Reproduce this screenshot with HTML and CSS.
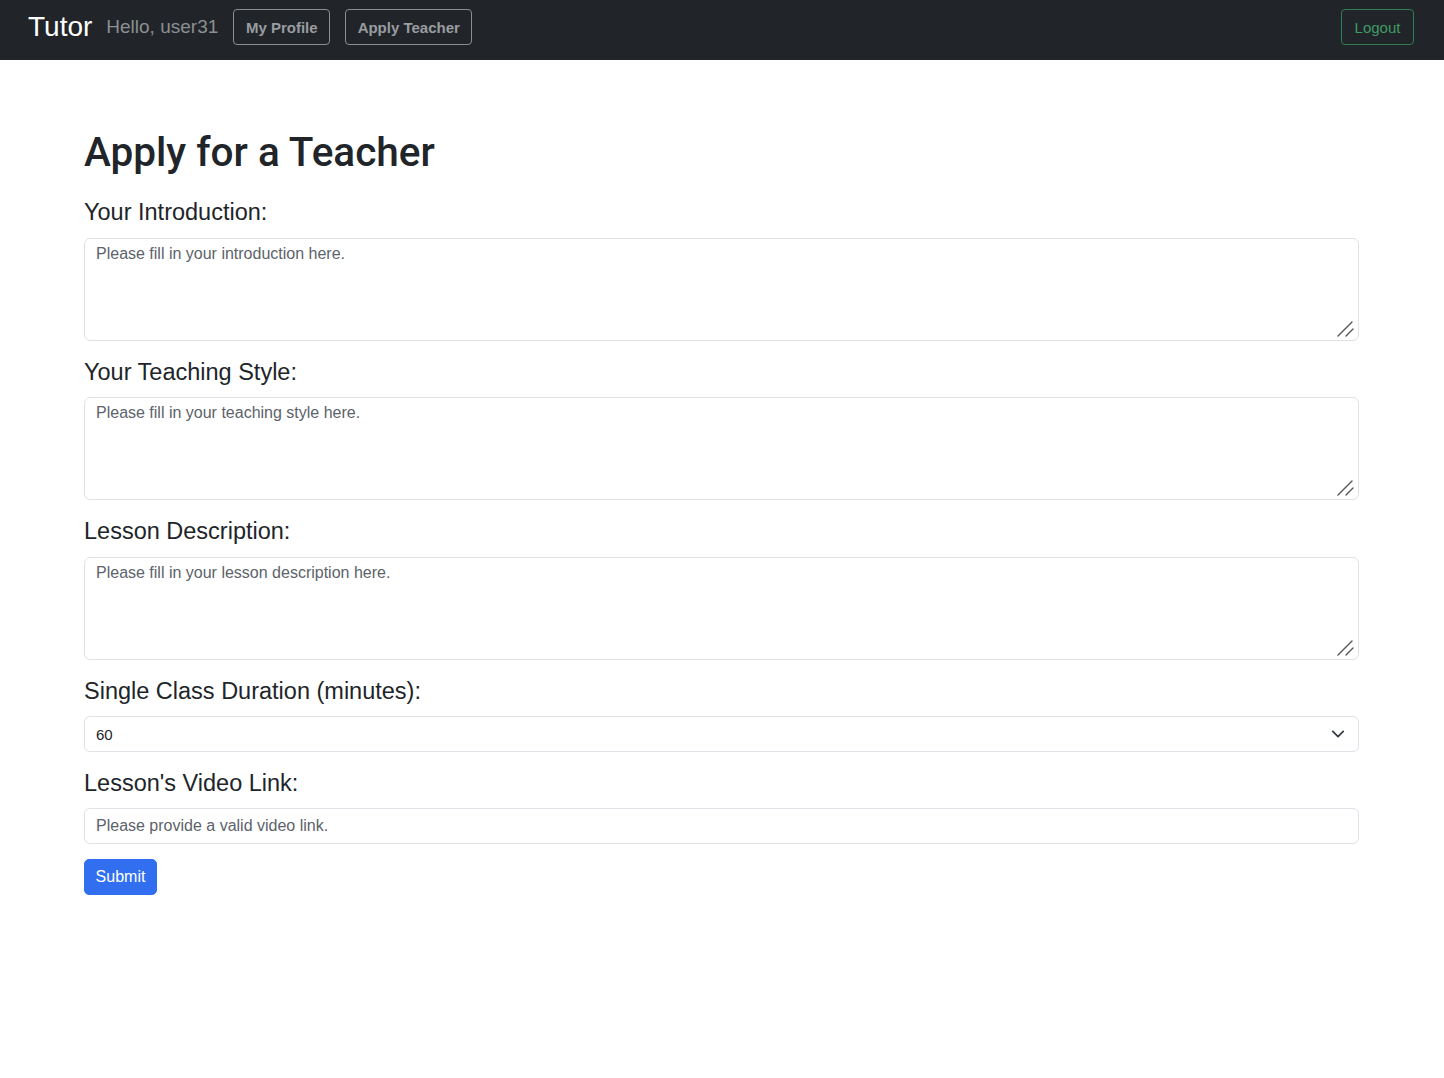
FILE: index.html
```html
<!DOCTYPE html>
<html lang="en">
<head>
<meta charset="utf-8">
<title>Apply Teacher</title>
<link rel="stylesheet" href="styles.css">
</head>
<body>
<nav class="navbar">
  <div class="nav-left">
    <a class="brand" href="#">Tutor</a>
    <span class="hello">Hello, user31</span>
    <a class="btn btn-outline-gray btn-profile" href="#">My Profile</a>
    <a class="btn btn-outline-gray btn-apply" href="#">Apply Teacher</a>
  </div>
  <a class="btn btn-outline-green" href="#">Logout</a>
</nav>
<main class="container">
  <h1 class="title">Apply for a Teacher</h1>
  <form class="form">
    <label class="label" for="intro">Your Introduction:</label>
    <div class="area-wrap">
      <textarea id="intro" class="field textarea" placeholder="Please fill in your introduction here."></textarea>
      <svg class="grip" width="20" height="20" viewBox="0 0 20 20"><path d="M2 17L16 3M10 17L17 10" stroke="#555" stroke-width="1.4" stroke-linecap="round"/></svg>
    </div>

    <label class="label" for="style">Your Teaching Style:</label>
    <div class="area-wrap">
      <textarea id="style" class="field textarea" placeholder="Please fill in your teaching style here."></textarea>
      <svg class="grip" width="20" height="20" viewBox="0 0 20 20"><path d="M2 17L16 3M10 17L17 10" stroke="#555" stroke-width="1.4" stroke-linecap="round"/></svg>
    </div>

    <label class="label" for="desc">Lesson Description:</label>
    <div class="area-wrap">
      <textarea id="desc" class="field textarea" placeholder="Please fill in your lesson description here."></textarea>
      <svg class="grip" width="20" height="20" viewBox="0 0 20 20"><path d="M2 17L16 3M10 17L17 10" stroke="#555" stroke-width="1.4" stroke-linecap="round"/></svg>
    </div>

    <label class="label" for="dur">Single Class Duration (minutes):</label>
    <div class="select-wrap">
      <select id="dur" class="field select">
        <option>30</option>
        <option selected>60</option>
        <option>90</option>
        <option>120</option>
      </select>
      <svg class="chevron" width="16" height="16" viewBox="0 0 16 16"><path d="M2 5l6 6 6-6" fill="none" stroke="#343a40" stroke-width="2" stroke-linecap="round" stroke-linejoin="round"/></svg>
    </div>

    <label class="label label-tight" for="video">Lesson's Video Link:</label>
    <input id="video" class="field input" type="text" placeholder="Please provide a valid video link.">

    <div class="actions">
      <button type="submit" class="submit">Submit</button>
    </div>
  </form>
</main>
</body>
</html>
```
FILE: styles.css
```css
* { box-sizing: border-box; }
html, body { margin: 0; padding: 0; }
body {
  font-family: "Liberation Sans", Arial, sans-serif;
  color: #212529;
  background: #fff;
}
.navbar {
  height: 60px;
  background: #212529;
  display: flex;
  align-items: center;
  justify-content: space-between;
  padding: 0 30px 6px 28px;
}
.nav-left {
  display: flex;
  align-items: center;
}
.brand {
  color: #fff;
  text-decoration: none;
  font-size: 28px;
  margin-right: 14px;
}
.hello {
  color: #8c8f93;
  font-size: 19px;
  margin-right: 15px;
}
.btn {
  display: inline-flex;
  align-items: center;
  justify-content: center;
  height: 36px;
  border-radius: 4px;
  font-size: 15px;
  text-decoration: none;
}
.btn-outline-gray {
  color: #999ca0;
  font-weight: bold;
  border: 1px solid #8a8e93;
  margin-right: 15px;
  padding: 0 11px;
}
.btn-profile { width: 97px; }
.btn-apply { width: 127px; }
.btn-outline-green {
  color: #3f9a66;
  border: 1px solid #2f7d50;
  width: 73px;
}
.container {
  margin: 0 85px 0 84px;
  padding-top: 68px;
}
.title {
  font-family: Roboto, "Liberation Sans", Arial, sans-serif;
  font-size: 40.5px;
  font-weight: 500;
  line-height: 48px;
  margin: 0;
}
.form {
  display: flex;
  flex-direction: column;
}
.label {
  font-size: 23.5px;
  line-height: 26.5px;
  margin: 18px 0 12px 0;
}
.label:first-child { margin-top: 23px; }
.label-tight { line-height: 26px; }
.field {
  width: 100%;
  border: 1px solid #dee2e6;
  border-radius: 6px;
  font-family: "Liberation Sans", Arial, sans-serif;
  font-size: 16px;
  color: #212529;
  padding: 6px 11px;
  background: #fff;
}
.field::placeholder { color: #5c636a; opacity: 1; }
.area-wrap { position: relative; }
.textarea {
  height: 103px;
  display: block;
  resize: none;
  padding-top: 6px;
}
.grip {
  position: absolute;
  right: 3px;
  bottom: 2px;
  pointer-events: none;
}
.select-wrap { position: relative; }
.select {
  height: 36px;
  appearance: none;
  -webkit-appearance: none;
  display: block;
  font-size: 15px;
}
.chevron {
  position: absolute;
  right: 14px;
  top: 11px;
  width: 14px;
  height: 14px;
  pointer-events: none;
}
.input { height: 36px; display: block; }
.actions { margin-top: 15px; }
.submit {
  background: #316ff0;
  color: #fff;
  border: 1px solid #316ff0;
  border-radius: 5px;
  height: 36px;
  width: 73px;
  font-size: 16px;
  font-family: "Liberation Sans", Arial, sans-serif;
  padding: 0;
}
```
